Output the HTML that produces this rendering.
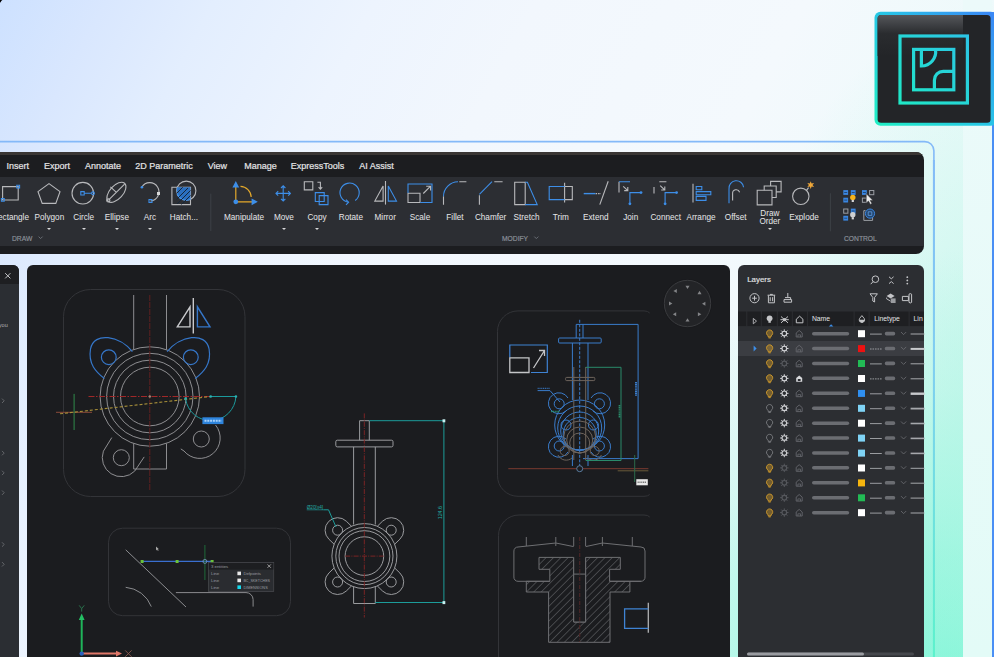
<!DOCTYPE html>
<html><head><meta charset="utf-8">
<style>
*{box-sizing:border-box;margin:0;padding:0}
html,body{width:994px;height:657px;overflow:hidden}
body{position:relative;font-family:"Liberation Sans",sans-serif;
background:radial-gradient(260px 420px at 1000px 420px,rgba(170,245,225,.6) 0%,rgba(170,245,225,0) 100%),radial-gradient(430px 470px at 950px 720px,rgba(118,246,212,1) 0%,rgba(135,246,218,.8) 35%,rgba(170,246,228,.35) 70%,rgba(200,246,235,0) 100%),linear-gradient(118deg,#cde1ff 0%,#d9e7fe 8%,#e3eefe 16%,#edf4fe 28%,#f2f7fd 40%,#f4f9fd 60%,#ecfafa 80%,#e2f9f5 100%)}
.a{position:absolute}
#frame{left:-20px;top:141px;width:955px;height:540px;border-radius:10px;border:1.5px solid #82b8f6;border-left:none;
border-color:#82b8f6 #7ed8e6 #60eccb #82b8f6}
#glow{display:none}
#glow2{left:963px;top:0;width:29px;height:657px;background:linear-gradient(180deg,#ecfafa,#e3fbf7)}
#rline{left:992px;top:12px;width:2px;height:645px;background:#4a8ff5}
#win{left:-10px;top:152px;width:934px;height:102.4px;border-radius:8px;background:#1c1d20;overflow:hidden}
#wtop{left:0;top:0;width:100%;height:3px;background:#3a3634}
#ribbon{left:0;top:25px;width:100%;height:69px;background:#2c2e33}
.menu{top:161.5px;line-height:1;font-size:9px;color:#e4e4e6;white-space:nowrap;-webkit-text-stroke:.2px currentColor}
.lbl{top:214px;line-height:1;font-size:8.2px;color:#e6e6e8;white-space:nowrap;transform:translateX(-50%)}
.grp{top:235.1px;line-height:1;font-size:7.8px;transform:scaleX(.86);transform-origin:0 0;color:#8b9099;white-space:nowrap;-webkit-text-stroke:.2px currentColor}
#lp{left:-10px;top:265px;width:29px;height:400px;border-radius:6px;background:#2b2e33;overflow:hidden}
#cv{left:27px;top:265px;width:703px;height:400px;border-radius:6px;background:#1b1c1f;overflow:hidden}
#ly{left:738px;top:265px;width:186px;height:400px;border-radius:6px;background:#2c2e32;overflow:hidden}
.dd{top:227.8px;width:0;height:0;border-left:2px solid transparent;border-right:2px solid transparent;border-top:2px solid #d8d8da}
</style></head><body>
<div class="a" id="glow"></div>
<div class="a" id="glow2"></div>
<svg class="a" style="left:0;top:0" width="994" height="657">
<defs><linearGradient id="fg" gradientUnits="userSpaceOnUse" x1="0" y1="141" x2="0" y2="657">
<stop offset="0" stop-color="#84b9f8"/><stop offset=".45" stop-color="#7fcff0"/><stop offset="1" stop-color="#5cf2cc"/></linearGradient></defs>
<path d="M-5 141.6H924.5A9.2 9.2 0 0 1 933.9 151V700" fill="none" stroke="url(#fg)" stroke-width="1.6"/>
<path d="M933.9 160V700" fill="none" stroke="url(#fg)" stroke-width="2"/>
</svg>
<div class="a" id="rline"></div>
<svg class="a" style="left:0;top:0" width="994" height="140">
<defs>
<linearGradient id="ibd" gradientUnits="userSpaceOnUse" x1="875" y1="126" x2="994" y2="12">
<stop offset="0" stop-color="#20f0c4"/><stop offset=".5" stop-color="#27c6e6"/><stop offset="1" stop-color="#3a86f6"/></linearGradient>
<linearGradient id="igl" x1="0" y1="0" x2="0" y2="1">
<stop offset="0" stop-color="#55575b"/><stop offset=".45" stop-color="#2a2c2f"/><stop offset="1" stop-color="#232528"/></linearGradient>
<linearGradient id="ilg" gradientUnits="userSpaceOnUse" x1="900" y1="104" x2="968" y2="35">
<stop offset="0" stop-color="#1fe8c6"/><stop offset="1" stop-color="#2cc4e6"/></linearGradient>
</defs>
<rect x="874.5" y="11.8" width="122" height="114" rx="6" fill="url(#ibd)"/>
<rect x="877.6" y="14.9" width="113" height="107.8" rx="3.5" fill="#232528"/>
<path d="M881 14.9H963V56H877.6V18.4A3.5 3.5 0 0 1 881 14.9Z" fill="url(#igl)"/>
<g fill="none" stroke="url(#ilg)" stroke-width="3.2">
<rect x="900" y="36" width="67.4" height="67"/>
<rect x="913.6" y="49.4" width="40.2" height="40.4"/>
<path d="M921.4 49.4V66A14.4 14.4 0 0 0 935.5 49.4"/>
<path d="M953.8 71.4H943.2A8.8 8.8 0 0 0 934.4 80.2V89.8"/>
</g>
</svg>


<div class="a" id="win">
  <div class="a" id="wtop"></div>
  <div class="a" id="ribbon"></div>
</div>
<span class="a menu" style="left:6.4px">Insert</span><span class="a menu" style="left:43.9px">Export</span><span class="a menu" style="left:84.9px">Annotate</span><span class="a menu" style="left:135.2px">2D Parametric</span><span class="a menu" style="left:207.7px">View</span><span class="a menu" style="left:244.2px">Manage</span><span class="a menu" style="left:290.7px">ExpressTools</span><span class="a menu" style="left:359.3px">AI Assist</span>
<span class="a lbl" style="left:29px;transform:translateX(-100%)">Rectangle</span><span class="a lbl" style="left:49.4px">Polygon</span><span class="a lbl" style="left:83.7px">Circle</span><span class="a lbl" style="left:116.9px">Ellipse</span><span class="a lbl" style="left:149.9px">Arc</span><span class="a lbl" style="left:183.9px">Hatch...</span><span class="a lbl" style="left:244px">Manipulate</span><span class="a lbl" style="left:283.9px">Move</span><span class="a lbl" style="left:317px">Copy</span><span class="a lbl" style="left:350.9px">Rotate</span><span class="a lbl" style="left:385.2px">Mirror</span><span class="a lbl" style="left:420px">Scale</span><span class="a lbl" style="left:455px">Fillet</span><span class="a lbl" style="left:490.6px">Chamfer</span><span class="a lbl" style="left:526.6px">Stretch</span><span class="a lbl" style="left:560.9px">Trim</span><span class="a lbl" style="left:595.8px">Extend</span><span class="a lbl" style="left:630.7px">Join</span><span class="a lbl" style="left:665.7px">Connect</span><span class="a lbl" style="left:701px">Arrange</span><span class="a lbl" style="left:735.7px">Offset</span><span class="a lbl" style="left:804px">Explode</span><span class="a lbl" style="left:769.9px;top:209.8px;text-align:center;line-height:8.4px">Draw<br>Order</span>
<div class="a dd" style="left:47.4px"></div><div class="a dd" style="left:81.7px"></div><div class="a dd" style="left:114.9px"></div><div class="a dd" style="left:147.9px"></div><div class="a dd" style="left:281.9px"></div><div class="a dd" style="left:315px"></div><div class="a dd" style="left:767.9px"></div>
<span class="a grp" style="left:11.7px">DRAW</span><span class="a grp" style="left:501.6px">MODIFY</span><span class="a grp" style="left:843.9px">CONTROL</span>
<svg class="a" style="left:0;top:0" width="994" height="260"><path d="M38.6 236.6l2 2 2-2M534.3 236.6l2 2 2-2" fill="none" stroke="#6f747c" stroke-width=".9"/><path d="M210.8 193.7V231M830.4 193.3V231.3" stroke="#3d4046" stroke-width="1"/></svg>

<div class="a" id="lp"></div>
<svg class="a" style="left:0;top:0" width="30" height="657">
<defs><clipPath id="lpc"><rect x="-10" y="265" width="29" height="400" rx="6"/></clipPath></defs>
<g clip-path="url(#lpc)">
<rect x="-10" y="265" width="29" height="19" fill="#1e1f22"/>
<path d="M5.2 273.2l5.2 5.2M10.4 273.2l-5.2 5.2" stroke="#c4c5c8" stroke-width="1"/>
<text x="-1.2" y="326.6" font-family="Liberation Sans" font-size="5.6" fill="#b0b2b5">you</text>
<g fill="none" stroke="#6a6c70" stroke-width=".9">
<path d="M2 398.6l2.2 2.2-2.2 2.2M2 450.9l2.2 2.2-2.2 2.2M2 470.7l2.2 2.2-2.2 2.2M2 490.5l2.2 2.2-2.2 2.2M2 542.3l2.2 2.2-2.2 2.2M2 562.1l2.2 2.2-2.2 2.2"/>
</g></g></svg>
<div class="a" id="cv"></div>
<svg class="a" style="left:0;top:0" width="994" height="657">
<defs><clipPath id="cvc"><rect x="27" y="265" width="703" height="400" rx="6"/></clipPath>
<pattern id="hp" patternUnits="userSpaceOnUse" width="5.2" height="5.2" patternTransform="rotate(45)"><path d="M0 0V5.2" stroke="#6e6f72" stroke-width="1"/></pattern></defs>
<g clip-path="url(#cvc)">
<!-- frames -->
<g fill="none" stroke="#333438" stroke-width="1">
<rect x="63.5" y="289.5" width="181.5" height="207" rx="27"/>
<rect x="108.5" y="528.2" width="182" height="87.5" rx="14"/>
<path d="M649.7 313Q648 310.9 644 310.9H518A20.5 20.5 0 0 0 497.5 331.4V475.8A20.5 20.5 0 0 0 518 496.3H644Q648 496.3 649.7 494.5"/>
<path d="M649.7 517Q648 515 644 515H519A20.5 20.5 0 0 0 498.5 535.5V700"/>
</g>
<!-- ===== drawing 1 ===== -->
<g fill="none" stroke="#939497" stroke-width=".95">
<path d="M133.7 295V349.5M166.5 295V349.5M133.7 443.5V469H166.5V443.5"/>
<circle cx="149.8" cy="396.5" r="49.7"/><circle cx="149.8" cy="396.5" r="43.2"/><circle cx="149.8" cy="396.5" r="36.3"/><circle cx="149.8" cy="396.5" r="29.3"/>
<circle cx="121.3" cy="457.7" r="8"/><circle cx="201.3" cy="439" r="8"/>
<path d="M111.8 437.6L103.4 451.2A19 19 0 0 0 134.7 471.1L144.2 456.9"/>
<path d="M180.8 448.9L184 451A19.5 19.5 0 0 0 215.5 425"/>
<path d="M190 333.6V298" stroke="#c8c9cc" stroke-width="1.4" transform="translate(3.3 0)"/>
<path d="M190 306.8V326.9H177.3Z" stroke="#c8c9cc" stroke-width="1.4"/>
</g>
<g fill="none" stroke="#3576c8" stroke-width="1.2">
<circle cx="108.8" cy="357.2" r="7.4"/><circle cx="190.8" cy="357.2" r="7.4"/>
<path d="M132.4 351.7C120 336 94 331 90.5 349C88 364 96 372 104.4 378.5"/>
<path d="M167.2 351.7C179.6 336 205.6 331 209.1 349C211.6 364 203.6 372 195.2 378.5"/>
<path d="M197.4 306.8V326.9H210Z" stroke-width="1.4"/>
</g>
<path d="M149.8 295V491" fill="none" stroke="#5e2020" stroke-width="1" stroke-dasharray="6 1"/>
<path d="M88.5 396.5H210.7" fill="none" stroke="#a02828" stroke-width="1" stroke-dasharray="6 1.5 1.5 1.5"/>
<circle cx="149.8" cy="396.5" r="1.2" fill="#9a8a7a"/>
<path d="M56 412.3H92" stroke="#8b4a3a" stroke-width="1"/>
<path d="M60 413.8L210.7 396.5" stroke="#a8903a" stroke-width="1.1" stroke-dasharray="3 2"/>
<path d="M74.1 393.9V430" stroke="#2f8a4a" stroke-width="1"/>
<g fill="none" stroke="#1b9a9c" stroke-width="1">
<path d="M210.7 396.5H235.9M185.6 399A25.3 25.3 0 0 0 235.9 396.5"/>
</g>
<g fill="#2ab2b2"><circle cx="185.6" cy="398.5" r="1.3"/><circle cx="210.7" cy="396.5" r="1.3"/><circle cx="235.9" cy="396.5" r="1.3"/></g>
<rect x="202.4" y="417.3" width="21.1" height="6.8" fill="#2e84dc"/>
<path d="M204.5 420.7H221.5" stroke="#a8d0f8" stroke-width="2" stroke-dasharray="2 .8"/>
<!-- ===== drawing 2 center valve ===== -->
<g fill="none" stroke="#a0a1a4" stroke-width=".95">
<path d="M359.6 440.2V420.7H369.3V440.2"/>
<rect x="335.8" y="440.2" width="57.2" height="6.7" rx="1.5"/>
<path d="M353.6 446.9V524.5M375.3 446.9V524.5M353.6 587V603.5H375.3V587"/>
<circle cx="364.4" cy="556.1" r="32.5"/><circle cx="364.4" cy="556.1" r="28.6"/><circle cx="364.4" cy="556.1" r="25.4"/><circle cx="364.4" cy="556.1" r="19.3"/>
<circle cx="337.6" cy="530.2" r="5"/><circle cx="391.2" cy="530.2" r="5"/><circle cx="337.6" cy="582" r="5"/><circle cx="391.2" cy="582" r="5"/>
<path d="M351.5 526.3L346.3 521.2A12.5 12.5 0 0 0 328.9 539.2L334.1 544.2M394.7 544.2L399.9 539.2A12.5 12.5 0 0 0 382.5 521.2L377.3 526.3M334.1 568.0L328.9 573.0A12.5 12.5 0 0 0 346.3 591.0L351.5 585.9M377.3 585.9L382.5 591.0A12.5 12.5 0 0 0 399.9 573.0L394.7 568.0"/>
</g>
<path d="M364.3 413.4V617.5M345.2 556.1H383.7" stroke="#862626" stroke-width=".9" stroke-dasharray="5 1.2 1 1.2" fill="none"/>
<g fill="none" stroke="#1c9c9a" stroke-width="1">
<path d="M369.3 420.7H443.9V602.5H375.3"/>
<path d="M323.4 509.8H328.5L336 527"/>
</g>
<rect x="442.5" y="419.3" width="2.8" height="3" fill="#c8f0f0"/><rect x="442.5" y="601.1" width="2.8" height="3" fill="#c8f0f0"/>
<text transform="translate(441.8 519.3) rotate(-90)" font-family="Liberation Sans" font-size="4.8" fill="#22aaa2" textLength="13.3" lengthAdjust="spacingAndGlyphs">124.6</text>
<text x="306.7" y="509" font-family="Liberation Sans" font-size="4.6" fill="#22aaa2" textLength="16.5" lengthAdjust="spacingAndGlyphs">Ø20[x4]</text><path d="M306.7 509.8H323.4" stroke="#1c9c9a" stroke-width=".7"/>
<!-- ===== drawing 3 blue valve ===== -->
<g fill="none" stroke="#3f83d4" stroke-width="1.2">
<path d="M509.8 357.5V345H547.3V372.5H531"/>
</g>
<path d="M509.8 357.9H529V372.5H509.8Z" fill="none" stroke="#c4c5c8" stroke-width="1.3"/>
<path d="M533.5 368L544.5 350.5M539 350.5H544.5V356" fill="none" stroke="#c4c5c8" stroke-width="1.3"/>
<g fill="none" stroke="#3a7ccb" stroke-width="1">
<path d="M576.2 338V324.4H583V338"/>
<rect x="558.6" y="338" width="42.6" height="5" rx="1"/>
<path d="M572.4 343V400M588 343V400M572.4 455V466M588 455V466"/>
<path d="M583 324.4H638.1V458.6H583"/>
<circle cx="579.7" cy="425" r="25"/><circle cx="579.7" cy="428" r="22"/><circle cx="579.7" cy="431" r="19"/><circle cx="579.7" cy="434" r="16.5"/><circle cx="566" cy="425" r="5"/><circle cx="593.4" cy="425" r="5"/>
<circle cx="559.2" cy="403.8" r="5"/><circle cx="599.4" cy="403.8" r="5"/><circle cx="559.2" cy="446" r="5"/><circle cx="599.4" cy="446" r="5"/>
<path d="M566 411A10.5 10.5 0 1 1 568 398M593 411A10.5 10.5 0 1 0 591 398M566 439A10.5 10.5 0 1 0 568 452M593 439A10.5 10.5 0 1 1 591 452"/>
</g>
<path d="M579.7 319.8V470.6" stroke="#3a7ccb" stroke-width="1" stroke-dasharray="3 1.5"/>
<g fill="none" stroke="#6e645c" stroke-width="1">
<rect x="565.6" y="377.4" width="29.2" height="3.2" rx="1"/>
<path d="M573.8 367V460M585.7 367V460"/>
<circle cx="579.7" cy="437" r="16"/><circle cx="579.7" cy="440" r="13"/><circle cx="579.7" cy="443" r="10"/>
<circle cx="564.7" cy="451" r="4.5"/><circle cx="594.7" cy="451" r="4.5"/>
<path d="M558 455A9 9 0 0 0 572 458M601.4 455A9 9 0 0 1 587.4 458"/>
</g>
<g fill="none" stroke="#2a8a6a" stroke-width="1">
<path d="M585.7 367.3H621V460.5H585.7"/>
</g>
<path d="M508.3 468.7H648.4" stroke="#7a3a30" stroke-width="1"/>
<path d="M617.7 470.8H648.4" stroke="#6a5a3a" stroke-width="1"/>
<path d="M634.7 455V482" stroke="#2a6a4a" stroke-width="1"/>
<circle cx="579.7" cy="468.7" r="3" fill="#1b1c1f" stroke="#5a7ca0" stroke-width="1"/>
<rect x="636.3" y="479.2" width="11.5" height="6.1" fill="#e8e8e8"/>
<path d="M637.6 482.2H646.6" stroke="#777" stroke-width="1.4" stroke-dasharray="1.2 .6"/>
<path d="M636 382V396" stroke="#3a7ccb" stroke-width="2" stroke-dasharray="1.2 .6"/>
<path d="M619.5 405V418" stroke="#2a8a6a" stroke-width="1.8" stroke-dasharray="1.2 .6"/>
<path d="M550 390.6L560 402" stroke="#3a7ccb" stroke-width="1"/>
<path d="M537.6 388.3H550" stroke="#3a7ccb" stroke-width="1" stroke-dasharray="1.2 .6"/>
<path d="M537.6 390.6H550" stroke="#3a7ccb" stroke-width="1"/>
<path d="M551 411.5H560" stroke="#2a8a6a" stroke-width="1.6" stroke-dasharray="1.2 .6"/>
<!-- ===== drawing 4 hatch T ===== -->
<g fill="none" stroke="#6e6f72" stroke-width="1">
<path d="M526.3 537V546M555.8 537V546M573.7 537V546M585.6 537V546M602.4 537V546M632.3 537V546"/>
<path d="M518 581.3A4 4 0 0 1 513.9 577V551A4 4 0 0 1 518 547L555.8 543 573.7 546.6M585.6 546.6L602.4 543 641 547A4 4 0 0 1 645 551V577A4 4 0 0 1 641 581.3H629.9"/>
</g>
<path d="M539 557.4H573.7V622H585.6V557.4H620.3V569.3H609.6V581.3H629.9V592H610V642.3H548.6V592H526.3V581.3H549.8V569.3H539Z" fill="url(#hp)" stroke="#6e6f72" stroke-width="1"/>
<path d="M573.7 557.4V622H585.6V557.4" fill="#1b1c1f" stroke="#6e6f72" stroke-width="1"/>
<path d="M518 581.3H549.8M609.6 581.3H641M573.7 574.1H585.6" fill="none" stroke="#6e6f72" stroke-width="1"/>
<path d="M579.7 537V642" stroke="#4a2626" stroke-width="1.2" stroke-dasharray="4 1.5 1 1.5"/>
<path d="M648.3 602.8V632.7" stroke="#b0b1b4" stroke-width="1.3"/>
<path d="M648.3 608.8H624.6V628.4H648.3" fill="none" stroke="#3f83d4" stroke-width="1.3"/>
<!-- ===== drawing 5 selection ===== -->
<g fill="none" stroke="#8a8b8e" stroke-width="1">
<path d="M125.7 549.8L186 607"/>
<path d="M125.7 587.3A30 30 0 0 1 151.3 606.6"/>
<path d="M175.9 592.6H246A7 7 0 0 1 253.1 599.6V606.6"/>
</g>
<path d="M142.1 561.4H212.1" stroke="#3a6fd0" stroke-width="1.3"/>
<path d="M204.9 545V580" stroke="#1f6a3a" stroke-width="1"/>
<g fill="#6ac23a"><rect x="140.6" y="560" width="3" height="3"/><rect x="175.6" y="560" width="3" height="3"/><rect x="210.6" y="560" width="3" height="3"/></g>
<circle cx="204.9" cy="561.4" r="2" fill="none" stroke="#7a9aba" stroke-width=".8"/>
<path d="M156 546.4v4l1-1 1 1.6.6-.3-.9-1.5h1.3z" fill="#aaa"/>
<rect x="208.5" y="562.6" width="65.2" height="29" fill="#2a2c30" stroke="#45474b" stroke-width=".8"/>
<rect x="208.9" y="563" width="64.4" height="6.6" fill="#1d1e21"/>
<g font-family="Liberation Sans" font-size="4.3" fill="#9a9ca0">
<text x="211" y="568.4">3 entities</text>
<text x="211" y="575.2">Line</text><text x="211" y="582.2">Line</text><text x="211" y="589">Line</text>
<text x="243.4" y="575.2" textLength="17.5" lengthAdjust="spacingAndGlyphs">Defpoints</text><text x="243.4" y="582.2" textLength="26.6" lengthAdjust="spacingAndGlyphs">BC_SKETCHES</text><text x="243.4" y="589" textLength="24.3" lengthAdjust="spacingAndGlyphs">DIMENSIONS</text>
</g>
<path d="M267.5 564.4l3.4 3.4M270.9 564.4l-3.4 3.4" stroke="#b8b8b8" stroke-width=".8"/>
<rect x="237.4" y="571.6" width="3.6" height="3.6" fill="#e8e8e8"/><rect x="237.4" y="578.6" width="3.6" height="3.6" fill="#e8e8e8"/><rect x="237.4" y="585.4" width="3.6" height="3.6" fill="#14d8ec"/>
<!-- UCS -->
<path d="M81.7 653.6V618" stroke="#1fb45a" stroke-width="2"/>
<path d="M78.8 620L81.7 613.6 84.6 620Z" fill="#24c064"/>
<path d="M79.2 605.4L81.7 608.6 84.2 605.4M81.7 608.6V611.6" fill="none" stroke="#2a7a50" stroke-width=".9"/>
<path d="M81.7 653.6H117" stroke="#e0786a" stroke-width="2"/>
<path d="M116 650.8L122 653.6 116 656.4Z" fill="#e0786a"/>
<path d="M125.2 650.4L131.6 656.8M131.6 650.4L125.2 656.8" fill="none" stroke="#8a5a50" stroke-width=".9"/>
<circle cx="81.7" cy="653.6" r="2.2" fill="#2a62c0"/>
<!-- nav wheel -->
<circle cx="687.5" cy="303.5" r="24.5" fill="#19191c" opacity=".6"/>
<circle cx="687.5" cy="303.5" r="23.2" fill="#232427" stroke="#3a3b3e" stroke-width="1"/>
<g fill="#838487"><path d="M685.5 285.7L689.5 285.7 687.5 289.1Z"/><path d="M685.5 321.6L689.5 321.6 687.5 318.2Z"/><path d="M669.0 301.5L669.0 305.5 672.4 303.5Z"/><path d="M705.4 301.8L705.4 305.8 702.0 303.8Z"/><path d="M676.8 289.0L676.8 293.0 673.4 291.0Z"/><path d="M697.5 294.2L701.5 294.2 699.5 290.8Z"/><path d="M676.2 312.2L676.2 316.2 672.8 314.2Z"/><path d="M697.9 312.2L697.9 316.2 701.3 314.2Z"/>
</g>
</g>
</svg>

<div class="a" id="ly"></div>
<svg class="a" style="left:0;top:0" width="994" height="657">
<rect x="738" y="311.5" width="8.3" height="14.6" fill="#1e1f22"/>
<rect x="747.3" y="311.5" width="13.5" height="14.6" fill="#1e1f22"/>
<rect x="761.8" y="311.5" width="15.0" height="14.6" fill="#1e1f22"/>
<rect x="777.8" y="311.5" width="14.0" height="14.6" fill="#1e1f22"/>
<rect x="792.8" y="311.5" width="14.1" height="14.6" fill="#1e1f22"/>
<rect x="807.9" y="311.5" width="45.7" height="14.6" fill="#1e1f22"/>
<rect x="854.6" y="311.5" width="14.0" height="14.6" fill="#1e1f22"/>
<rect x="869.6" y="311.5" width="39.0" height="14.6" fill="#1e1f22"/>
<rect x="909.6" y="311.5" width="14.4" height="14.6" fill="#1e1f22"/>
<rect x="738" y="341" width="186" height="15" fill="#3b3d42"/>
<path d="M753.3 318.4v5.4l3.2-2.7z" fill="none" stroke="#b8b9bc" stroke-width=".9"/>
<circle cx="769.6" cy="318.3" r="2.9" fill="#c4c5c8"/><rect x="768.4" y="321" width="2.4" height="1.8" fill="#c4c5c8"/>
<g stroke="#c4c5c8" stroke-width="1"><path d="M781 316.5l7 6.4M788 316.5l-7 6.4M780.4 319.7h8.4"/></g><circle cx="784.5" cy="319.7" r="1.6" fill="#c4c5c8"/>
<path d="M796.3 322.8v-3.6l3.3-3 3.3 3v3.6z" fill="none" stroke="#c4c5c8" stroke-width="1"/>
<path d="M828.9 326.4l2.2-2.2 2.2 2.2z" fill="#3d8ee8"/>
<path d="M859.3 319.8a2.6 2.6 0 0 0 5.2 0z" fill="#c4c5c8"/><path d="M861.9 315.6l-2.4 3a2.7 2.7 0 1 0 4.8 0z" fill="none" stroke="#c4c5c8" stroke-width=".9"/>
<g fill="none" stroke="#c9962d" stroke-width="1"><path d="M768.2 335.8A3.1 3.1 0 1 1 771 335.8V337.0H768.2Z" fill="#c9962d" fill-opacity=".45"/><path d="M768.5 337.9h2.2"/></g>
<g stroke="#cfd0d3" stroke-width="1"><path d="M784.3 329.4v8.4M780.1 333.6h8.4M781.3 330.6l6 6M787.3 330.6l-6 6"/></g><circle cx="784.3" cy="333.6" r="2.3" fill="#2c2e32" stroke="#cfd0d3" stroke-width="1.1"/>
<path d="M796.2 337.0v-4l3-2.6 3 2.6v4z" fill="none" stroke="#65676c" stroke-width=".9"/><path d="M797.9 337.0v-2.2h2.6v2.2" fill="none" stroke="#65676c" stroke-width=".8"/>
<rect x="812" y="331.9" width="37.2" height="3.5" rx="1.75" fill="#6b6d72"/>
<rect x="858" y="330.2" width="7" height="7" fill="#ffffff"/>
<path d="M870 334.1h11.8" stroke="#9a9ca0" stroke-width="1"/>
<rect x="884.8" y="331.8" width="10.4" height="3.6" rx="1.6" fill="#6b6d72"/>
<path d="M901 332.0l2.6 2.6 2.6-2.6" fill="none" stroke="#6d6f74" stroke-width=".8"/>
<path d="M910.6 334.0h14" stroke="#a6a8ac" stroke-width="1.0"/>
<g fill="none" stroke="#c9962d" stroke-width="1"><path d="M768.2 350.7A3.1 3.1 0 1 1 771 350.7V351.9H768.2Z" fill="#c9962d" fill-opacity=".45"/><path d="M768.5 352.8h2.2"/></g>
<g stroke="#cfd0d3" stroke-width="1"><path d="M784.3 344.3v8.4M780.1 348.5h8.4M781.3 345.5l6 6M787.3 345.5l-6 6"/></g><circle cx="784.3" cy="348.5" r="2.3" fill="#2c2e32" stroke="#cfd0d3" stroke-width="1.1"/>
<path d="M796.2 351.9v-4l3-2.6 3 2.6v4z" fill="none" stroke="#65676c" stroke-width=".9"/><path d="M797.9 351.9v-2.2h2.6v2.2" fill="none" stroke="#65676c" stroke-width=".8"/>
<rect x="812" y="346.8" width="37.2" height="3.5" rx="1.75" fill="#6b6d72"/>
<rect x="858" y="345.1" width="7" height="7" fill="#ee1111"/>
<path d="M870 349.0h11.8" stroke="#9a9ca0" stroke-width="1" stroke-dasharray="1.6 .9"/>
<rect x="884.8" y="346.7" width="10.4" height="3.6" rx="1.6" fill="#6b6d72"/>
<path d="M901 346.9l2.6 2.6 2.6-2.6" fill="none" stroke="#6d6f74" stroke-width=".8"/>
<path d="M910.6 348.9h14" stroke="#c8cacd" stroke-width="2.0"/>
<g fill="none" stroke="#c9962d" stroke-width="1"><path d="M768.2 365.6A3.1 3.1 0 1 1 771 365.6V366.8H768.2Z" fill="#c9962d" fill-opacity=".45"/><path d="M768.5 367.7h2.2"/></g>
<g stroke="#56585d" stroke-width="1"><path d="M784.3 359.2v8.4M780.1 363.4h8.4M781.3 360.4l6 6M787.3 360.4l-6 6"/></g><circle cx="784.3" cy="363.4" r="2.3" fill="#2c2e32" stroke="#56585d" stroke-width="1.1"/>
<path d="M796.2 366.8v-4l3-2.6 3 2.6v4z" fill="none" stroke="#65676c" stroke-width=".9"/><path d="M797.9 366.8v-2.2h2.6v2.2" fill="none" stroke="#65676c" stroke-width=".8"/>
<rect x="812" y="361.7" width="37.2" height="3.5" rx="1.75" fill="#6b6d72"/>
<rect x="858" y="360.0" width="7" height="7" fill="#22bb55"/>
<path d="M870 363.9h11.8" stroke="#9a9ca0" stroke-width="1"/>
<rect x="884.8" y="361.6" width="10.4" height="3.6" rx="1.6" fill="#6b6d72"/>
<path d="M901 361.8l2.6 2.6 2.6-2.6" fill="none" stroke="#6d6f74" stroke-width=".8"/>
<path d="M910.6 363.8h14" stroke="#a6a8ac" stroke-width="1.0"/>
<g fill="none" stroke="#c9962d" stroke-width="1"><path d="M768.2 380.6A3.1 3.1 0 1 1 771 380.6V381.8H768.2Z" fill="#c9962d" fill-opacity=".45"/><path d="M768.5 382.7h2.2"/></g>
<g stroke="#cfd0d3" stroke-width="1"><path d="M784.3 374.2v8.4M780.1 378.4h8.4M781.3 375.4l6 6M787.3 375.4l-6 6"/></g><circle cx="784.3" cy="378.4" r="2.3" fill="#2c2e32" stroke="#cfd0d3" stroke-width="1.1"/>
<path d="M796.2 381.8v-3.8l3-2.4 3 2.4v3.8z" fill="#d8d9dc"/><path d="M797.8 379.0h2.8v2h-2.8z" fill="#2c2e32"/>
<rect x="812" y="376.6" width="37.2" height="3.5" rx="1.75" fill="#6b6d72"/>
<rect x="858" y="375.0" width="7" height="7" fill="#ffffff"/>
<path d="M870 378.9h11.8" stroke="#9a9ca0" stroke-width="1" stroke-dasharray="1.6 .9"/>
<rect x="884.8" y="376.6" width="10.4" height="3.6" rx="1.6" fill="#6b6d72"/>
<path d="M901 376.8l2.6 2.6 2.6-2.6" fill="none" stroke="#6d6f74" stroke-width=".8"/>
<path d="M910.6 378.8h14" stroke="#a6a8ac" stroke-width="1.0"/>
<g fill="none" stroke="#c9962d" stroke-width="1"><path d="M768.2 395.5A3.1 3.1 0 1 1 771 395.5V396.7H768.2Z" fill="#c9962d" fill-opacity=".45"/><path d="M768.5 397.6h2.2"/></g>
<g stroke="#cfd0d3" stroke-width="1"><path d="M784.3 389.1v8.4M780.1 393.3h8.4M781.3 390.3l6 6M787.3 390.3l-6 6"/></g><circle cx="784.3" cy="393.3" r="2.3" fill="#2c2e32" stroke="#cfd0d3" stroke-width="1.1"/>
<path d="M796.2 396.7v-4l3-2.6 3 2.6v4z" fill="none" stroke="#65676c" stroke-width=".9"/><path d="M797.9 396.7v-2.2h2.6v2.2" fill="none" stroke="#65676c" stroke-width=".8"/>
<rect x="812" y="391.5" width="37.2" height="3.5" rx="1.75" fill="#6b6d72"/>
<rect x="858" y="389.9" width="7" height="7" fill="#2f8ff0"/>
<path d="M870 393.8h11.8" stroke="#9a9ca0" stroke-width="1"/>
<rect x="884.8" y="391.5" width="10.4" height="3.6" rx="1.6" fill="#6b6d72"/>
<path d="M901 391.7l2.6 2.6 2.6-2.6" fill="none" stroke="#6d6f74" stroke-width=".8"/>
<path d="M910.6 393.7h14" stroke="#c8cacd" stroke-width="2.4"/>
<g fill="none" stroke="#74767a" stroke-width="1"><path d="M768.2 410.4A3.1 3.1 0 1 1 771 410.4V411.6H768.2Z" fill="#74767a" fill-opacity="0"/><path d="M768.5 412.5h2.2"/></g>
<g stroke="#cfd0d3" stroke-width="1"><path d="M784.3 404.0v8.4M780.1 408.2h8.4M781.3 405.2l6 6M787.3 405.2l-6 6"/></g><circle cx="784.3" cy="408.2" r="2.3" fill="#2c2e32" stroke="#cfd0d3" stroke-width="1.1"/>
<path d="M796.2 411.6v-4l3-2.6 3 2.6v4z" fill="none" stroke="#65676c" stroke-width=".9"/><path d="M797.9 411.6v-2.2h2.6v2.2" fill="none" stroke="#65676c" stroke-width=".8"/>
<rect x="812" y="406.5" width="37.2" height="3.5" rx="1.75" fill="#6b6d72"/>
<rect x="858" y="404.8" width="7" height="7" fill="#7fd3f5"/>
<path d="M870 408.7h11.8" stroke="#9a9ca0" stroke-width="1"/>
<rect x="884.8" y="406.4" width="10.4" height="3.6" rx="1.6" fill="#6b6d72"/>
<path d="M901 406.6l2.6 2.6 2.6-2.6" fill="none" stroke="#6d6f74" stroke-width=".8"/>
<path d="M910.6 408.6h14" stroke="#a6a8ac" stroke-width="1.8"/>
<g fill="none" stroke="#74767a" stroke-width="1"><path d="M768.2 425.3A3.1 3.1 0 1 1 771 425.3V426.5H768.2Z" fill="#74767a" fill-opacity="0"/><path d="M768.5 427.4h2.2"/></g>
<g stroke="#cfd0d3" stroke-width="1"><path d="M784.3 418.9v8.4M780.1 423.1h8.4M781.3 420.1l6 6M787.3 420.1l-6 6"/></g><circle cx="784.3" cy="423.1" r="2.3" fill="#2c2e32" stroke="#cfd0d3" stroke-width="1.1"/>
<path d="M796.2 426.5v-4l3-2.6 3 2.6v4z" fill="none" stroke="#65676c" stroke-width=".9"/><path d="M797.9 426.5v-2.2h2.6v2.2" fill="none" stroke="#65676c" stroke-width=".8"/>
<rect x="812" y="421.4" width="37.2" height="3.5" rx="1.75" fill="#6b6d72"/>
<rect x="858" y="419.7" width="7" height="7" fill="#ffffff"/>
<path d="M870 423.6h11.8" stroke="#9a9ca0" stroke-width="1"/>
<rect x="884.8" y="421.3" width="10.4" height="3.6" rx="1.6" fill="#6b6d72"/>
<path d="M901 421.5l2.6 2.6 2.6-2.6" fill="none" stroke="#6d6f74" stroke-width=".8"/>
<path d="M910.6 423.5h14" stroke="#a6a8ac" stroke-width="1.6"/>
<g fill="none" stroke="#74767a" stroke-width="1"><path d="M768.2 440.2A3.1 3.1 0 1 1 771 440.2V441.4H768.2Z" fill="#74767a" fill-opacity="0"/><path d="M768.5 442.3h2.2"/></g>
<g stroke="#cfd0d3" stroke-width="1"><path d="M784.3 433.8v8.4M780.1 438.0h8.4M781.3 435.0l6 6M787.3 435.0l-6 6"/></g><circle cx="784.3" cy="438.0" r="2.3" fill="#2c2e32" stroke="#cfd0d3" stroke-width="1.1"/>
<path d="M796.2 441.4v-4l3-2.6 3 2.6v4z" fill="none" stroke="#65676c" stroke-width=".9"/><path d="M797.9 441.4v-2.2h2.6v2.2" fill="none" stroke="#65676c" stroke-width=".8"/>
<rect x="812" y="436.3" width="37.2" height="3.5" rx="1.75" fill="#6b6d72"/>
<rect x="858" y="434.6" width="7" height="7" fill="#7fd3f5"/>
<path d="M870 438.5h11.8" stroke="#9a9ca0" stroke-width="1"/>
<rect x="884.8" y="436.2" width="10.4" height="3.6" rx="1.6" fill="#6b6d72"/>
<path d="M901 436.4l2.6 2.6 2.6-2.6" fill="none" stroke="#6d6f74" stroke-width=".8"/>
<path d="M910.6 438.4h14" stroke="#a6a8ac" stroke-width="1.6"/>
<g fill="none" stroke="#74767a" stroke-width="1"><path d="M768.2 455.2A3.1 3.1 0 1 1 771 455.2V456.4H768.2Z" fill="#74767a" fill-opacity="0"/><path d="M768.5 457.3h2.2"/></g>
<g stroke="#cfd0d3" stroke-width="1"><path d="M784.3 448.8v8.4M780.1 453.0h8.4M781.3 450.0l6 6M787.3 450.0l-6 6"/></g><circle cx="784.3" cy="453.0" r="2.3" fill="#2c2e32" stroke="#cfd0d3" stroke-width="1.1"/>
<path d="M796.2 456.4v-4l3-2.6 3 2.6v4z" fill="none" stroke="#65676c" stroke-width=".9"/><path d="M797.9 456.4v-2.2h2.6v2.2" fill="none" stroke="#65676c" stroke-width=".8"/>
<rect x="812" y="451.2" width="37.2" height="3.5" rx="1.75" fill="#6b6d72"/>
<rect x="858" y="449.6" width="7" height="7" fill="#7fd3f5"/>
<path d="M870 453.5h11.8" stroke="#9a9ca0" stroke-width="1"/>
<rect x="884.8" y="451.2" width="10.4" height="3.6" rx="1.6" fill="#6b6d72"/>
<path d="M901 451.4l2.6 2.6 2.6-2.6" fill="none" stroke="#6d6f74" stroke-width=".8"/>
<path d="M910.6 453.4h14" stroke="#a6a8ac" stroke-width="1.6"/>
<g fill="none" stroke="#c9962d" stroke-width="1"><path d="M768.2 470.1A3.1 3.1 0 1 1 771 470.1V471.3H768.2Z" fill="#c9962d" fill-opacity=".45"/><path d="M768.5 472.2h2.2"/></g>
<g stroke="#56585d" stroke-width="1"><path d="M784.3 463.7v8.4M780.1 467.9h8.4M781.3 464.9l6 6M787.3 464.9l-6 6"/></g><circle cx="784.3" cy="467.9" r="2.3" fill="#2c2e32" stroke="#56585d" stroke-width="1.1"/>
<path d="M796.2 471.3v-4l3-2.6 3 2.6v4z" fill="none" stroke="#65676c" stroke-width=".9"/><path d="M797.9 471.3v-2.2h2.6v2.2" fill="none" stroke="#65676c" stroke-width=".8"/>
<rect x="812" y="466.1" width="37.2" height="3.5" rx="1.75" fill="#6b6d72"/>
<rect x="858" y="464.5" width="7" height="7" fill="#ffffff"/>
<path d="M870 468.4h11.8" stroke="#9a9ca0" stroke-width="1"/>
<rect x="884.8" y="466.1" width="10.4" height="3.6" rx="1.6" fill="#6b6d72"/>
<path d="M901 466.3l2.6 2.6 2.6-2.6" fill="none" stroke="#6d6f74" stroke-width=".8"/>
<path d="M910.6 468.3h14" stroke="#a6a8ac" stroke-width="1.0"/>
<g fill="none" stroke="#c9962d" stroke-width="1"><path d="M768.2 485.0A3.1 3.1 0 1 1 771 485.0V486.2H768.2Z" fill="#c9962d" fill-opacity=".45"/><path d="M768.5 487.1h2.2"/></g>
<g stroke="#56585d" stroke-width="1"><path d="M784.3 478.6v8.4M780.1 482.8h8.4M781.3 479.8l6 6M787.3 479.8l-6 6"/></g><circle cx="784.3" cy="482.8" r="2.3" fill="#2c2e32" stroke="#56585d" stroke-width="1.1"/>
<path d="M796.2 486.2v-4l3-2.6 3 2.6v4z" fill="none" stroke="#65676c" stroke-width=".9"/><path d="M797.9 486.2v-2.2h2.6v2.2" fill="none" stroke="#65676c" stroke-width=".8"/>
<rect x="812" y="481.1" width="37.2" height="3.5" rx="1.75" fill="#6b6d72"/>
<rect x="858" y="479.4" width="7" height="7" fill="#f5b50f"/>
<path d="M870 483.3h11.8" stroke="#9a9ca0" stroke-width="1"/>
<rect x="884.8" y="481.0" width="10.4" height="3.6" rx="1.6" fill="#6b6d72"/>
<path d="M901 481.2l2.6 2.6 2.6-2.6" fill="none" stroke="#6d6f74" stroke-width=".8"/>
<path d="M910.6 483.2h14" stroke="#a6a8ac" stroke-width="1.0"/>
<g fill="none" stroke="#c9962d" stroke-width="1"><path d="M768.2 499.9A3.1 3.1 0 1 1 771 499.9V501.1H768.2Z" fill="#c9962d" fill-opacity=".45"/><path d="M768.5 502.0h2.2"/></g>
<g stroke="#56585d" stroke-width="1"><path d="M784.3 493.5v8.4M780.1 497.7h8.4M781.3 494.7l6 6M787.3 494.7l-6 6"/></g><circle cx="784.3" cy="497.7" r="2.3" fill="#2c2e32" stroke="#56585d" stroke-width="1.1"/>
<path d="M796.2 501.1v-4l3-2.6 3 2.6v4z" fill="none" stroke="#65676c" stroke-width=".9"/><path d="M797.9 501.1v-2.2h2.6v2.2" fill="none" stroke="#65676c" stroke-width=".8"/>
<rect x="812" y="496.0" width="37.2" height="3.5" rx="1.75" fill="#6b6d72"/>
<rect x="858" y="494.3" width="7" height="7" fill="#22bb55"/>
<path d="M870 498.2h11.8" stroke="#9a9ca0" stroke-width="1"/>
<rect x="884.8" y="495.9" width="10.4" height="3.6" rx="1.6" fill="#6b6d72"/>
<path d="M901 496.1l2.6 2.6 2.6-2.6" fill="none" stroke="#6d6f74" stroke-width=".8"/>
<path d="M910.6 498.1h14" stroke="#a6a8ac" stroke-width="1.0"/>
<g fill="none" stroke="#c9962d" stroke-width="1"><path d="M768.2 514.8A3.1 3.1 0 1 1 771 514.8V516.0H768.2Z" fill="#c9962d" fill-opacity=".45"/><path d="M768.5 516.9h2.2"/></g>
<g stroke="#56585d" stroke-width="1"><path d="M784.3 508.4v8.4M780.1 512.6h8.4M781.3 509.6l6 6M787.3 509.6l-6 6"/></g><circle cx="784.3" cy="512.6" r="2.3" fill="#2c2e32" stroke="#56585d" stroke-width="1.1"/>
<path d="M796.2 516.0v-4l3-2.6 3 2.6v4z" fill="none" stroke="#65676c" stroke-width=".9"/><path d="M797.9 516.0v-2.2h2.6v2.2" fill="none" stroke="#65676c" stroke-width=".8"/>
<rect x="812" y="510.9" width="37.2" height="3.5" rx="1.75" fill="#6b6d72"/>
<rect x="858" y="509.2" width="7" height="7" fill="#ffffff"/>
<path d="M870 513.1h11.8" stroke="#9a9ca0" stroke-width="1"/>
<rect x="884.8" y="510.8" width="10.4" height="3.6" rx="1.6" fill="#6b6d72"/>
<path d="M901 511.0l2.6 2.6 2.6-2.6" fill="none" stroke="#6d6f74" stroke-width=".8"/>
<path d="M910.6 513.0h14" stroke="#a6a8ac" stroke-width="1.0"/>
<path d="M753.6 345.6v6l3-3z" fill="#3d8ee8"/>
<rect x="747" y="652.5" width="167" height="3" rx="1.5" fill="#46484d"/><rect x="747" y="652.5" width="117" height="3" rx="1.5" fill="#9a9ca1"/>
<g fill="none" stroke="#c4c5c8" stroke-width="1">
<circle cx="875.4" cy="279.2" r="3.3"/><path d="M873.1 281.6l-2.4 2.6"/>
<path d="M889 276.8l2.3 2 2.3-2M889 283.6l2.3-2 2.3 2"/>
<circle cx="754.5" cy="298.2" r="4.6"/><path d="M754.5 295.8v4.8M752.1 298.2h4.8"/>
<path d="M767.6 295.2h7.6M770 294.4h2.8M768.4 295.4v7.4h6v-7.4M770.2 297.2v4M772.6 297.2v4"/>
<path d="M787.8 293v4.6M785 297.6h5.6v2M784 299.6h7.6v2.6h-7.6z"/>
<path d="M870 293.8h7.4l-2.8 3.6v4.6l-1.8-1v-3.6z"/>
<path d="M902.4 296.4h6v4.2h-6zM909 294.2a2 2 0 0 1 2.6 0v8.2a2 2 0 0 1-2.6 0z"/>
</g>
<path d="M886.6 296l4-2.4 4 2.4-4 2.4z" fill="#c4c5c8"/><path d="M886.6 297.6v1.2l4 2.4" fill="none" stroke="#c4c5c8" stroke-width=".9"/><rect x="890.8" y="298.4" width="4.8" height="4.6" fill="#9a9ca0"/>
<g fill="#c4c5c8"><circle cx="907.3" cy="277.2" r=".9"/><circle cx="907.3" cy="280.4" r=".9"/><circle cx="907.3" cy="283.6" r=".9"/></g>
</svg>
<span class="a" style="left:747.2px;top:276px;font-size:7.9px;line-height:1;color:#e2e3e5;-webkit-text-stroke:.15px #e2e3e5">Layers</span>
<span class="a" style="left:811.9px;top:315.5px;font-size:6.8px;line-height:1;color:#e2e3e5">Name</span>
<span class="a" style="left:874.2px;top:315.5px;font-size:6.8px;line-height:1;color:#e2e3e5">Linetype</span>
<span class="a" style="left:913.6px;top:315.5px;font-size:6.8px;line-height:1;color:#e2e3e5">Lin</span>

<svg class="a" style="left:0;top:0" width="994" height="260">
<g fill="none" stroke="#b8b9bc" stroke-width="1.1">
<!-- rectangle -->
<path d="M2.6 186.6H18.2V200H2.6Z"/>
<!-- polygon -->
<path d="M49 183.6L60 191.6 55.8 203.4H42.2L38 191.6Z"/>
<!-- circle -->
<circle cx="82.8" cy="193.2" r="10.8"/>
<!-- ellipse -->
<ellipse cx="116.4" cy="192.3" rx="12.2" ry="6.6" transform="rotate(-48 116.4 192.3)"/>
<path d="M108.5 200.2L124.6 184.2M116.4 192.3L110.4 186.8"/>
<circle cx="108.3" cy="200.4" r="1.6"/>
<!-- arc -->
<path d="M141.8 187.2A9.2 9.2 0 1 1 150.5 201"/>
<!-- hatch -->
<path d="M171.9 187.2H190.5V204.6H171.9Z"/>
<circle cx="186.3" cy="190.7" r="9.6"/>
<!-- copy gray -->
<path d="M304.3 181.7H312.8V189.9H304.3Z"/>
<path d="M317.4 182.3H320.4V188.8M318.6 187.2l1.8 1.9 1.8-1.9"/>
<!-- mirror -->
<path d="M385.5 181V204.6"/>
<path d="M383.1 185.9V201.1H374.8Z"/>
<!-- scale gray -->
<path d="M408 193.2H420V202.5H408Z"/>
<path d="M423.3 193.5L430.6 186.2M426.2 186.2H430.6V190.6"/>
<!-- fillet/chamfer gray -->
<path d="M443.5 196.3V204.8M459.3 181.7H466.4M479.4 195.3V204.8M494.3 181.7H502.6"/>
<!-- stretch gray -->
<path d="M514.7 182.3H525.2V204.6H514.7Z"/>
<!-- trim gray -->
<path d="M564.6 186.5H572.3V199.6H564.6M564.6 182.7V202.6"/>
<!-- extend gray -->
<path d="M599.8 204.6L608.2 181.3"/>
<path d="M595.6 193.6H601" stroke-dasharray="1.5 1"/>
<!-- join gray -->
<path d="M619 192.6V181.7M623.2 186.3L627.6 190.4M624.2 190.6H627.8V187"/>
<!-- connect gray -->
<path d="M654 187V193.4M659.3 181.7H666.4M660.2 185.6L664.6 189.8M661.2 190H664.8V186.4"/>
<!-- arrange gray -->
<path d="M693 183.7V202.6"/>
<!-- offset gray -->
<path d="M732.6 200.5V193.6A3.6 3.6 0 0 1 739.6 192.2"/>
<!-- draw order -->
<path d="M770.6 186V181.4H781.1V191.9H776.2M764.2 190.2V186H776.2V197.5H772"/>
<path d="M757.2 190.2H772V204.9H757.2Z"/>
<!-- explode -->
<circle cx="800.8" cy="196.3" r="8.2"/>
<path d="M806.5 190.4L808.6 187.6"/>
</g>
<g fill="none" stroke="#3d8ee8" stroke-width="1.1">
<path d="M16.8 185.2h2.8v2.8h-2.8zM1.4 198.5h2.8v2.8H1.4z"/>
<path d="M80.8 191.6h3.4v3.4h-3.4zM84.2 193.3H91.6"/>
<circle cx="93" cy="193.3" r="1.4"/>
<path d="M149 199.5h3v3h-3z"/>
<!-- hatch blue region -->
<!-- move -->
<path d="M283.2 185.8V201M275.6 193.4H290.8M281 188l2.2-2.2 2.2 2.2M281 198.8l2.2 2.2 2.2-2.2M278.2 191.2l-2.2 2.2 2.2 2.2M288.2 191.2l2.2 2.2-2.2 2.2"/>
<!-- copy blue -->
<path d="M315.3 192.6H324.2V201.5H315.3Z"/>
<path d="M319.2 195.6H328V204.6H319.2Z"/>
<!-- rotate -->
<path d="M355.2 200.5A9.6 9.6 0 1 0 348.2 202.2"/>
<path d="M346 199.6l2.6 2.6-2.6 2.6"/>
<!-- mirror blue -->
<path d="M388.3 185.9V201.1H396.5Z"/>
<!-- scale blue -->
<path d="M408 193V184H432V202.5H420.2"/>
<!-- fillet -->
<path d="M443.5 196.3A14.8 14.8 0 0 1 458 181.7"/>
<!-- chamfer -->
<path d="M479.4 194.3L492 181.6"/>
<!-- stretch -->
<path d="M525.2 182.3H527.4L537.2 204.6H525.2"/>
<!-- trim -->
<path d="M564.6 186.5H549.2V199.6H564.6"/>
<!-- extend -->
<path d="M583.7 193.6H595.4" stroke-width="1.4"/>
<!-- join -->
<path d="M619 181.7H630M629.9 203.6V192.6H640.5"/>
<!-- connect -->
<path d="M665.1 203.6V192.6H676"/>
<!-- arrange -->
<path d="M696.2 186.5h5.6v3.3h-5.6zM696.2 191.6h14.6v3.2h-14.6zM696.2 196.4h9.8v4h-9.8z"/>
<!-- offset -->
<path d="M729 203.2V189A7 7 0 0 1 743.6 187.2"/>
</g>
<g fill="#3d8ee8">
<circle cx="141.9" cy="187.3" r="1.3"/>
<circle cx="629.9" cy="203.8" r="1.4"/><circle cx="641" cy="192.6" r="1.4"/>
<circle cx="665.1" cy="203.8" r="1.4"/><circle cx="676.6" cy="192.6" r="1.4"/>
</g>
<rect x="157" y="192" width="3" height="3" fill="#d8d8d8"/>
<!-- hatch blue shape -->
<clipPath id="hc"><rect x="176.6" y="187.2" width="13.9" height="17.4"/></clipPath>
<g clip-path="url(#hc)"><circle cx="186.3" cy="190.7" r="9.6" fill="#2a6fc0" stroke="#3d8ee8" stroke-width="1.1"/>
<path d="M174 202L188 188M177 204L191 190M181 205L192 194M172 198L184 186" stroke="#16263a" stroke-width="1"/></g>
<!-- manipulate -->
<path d="M235.8 187V201.8H252M240.5 186.4A11 11 0 0 1 251.2 197" fill="none" stroke="#e3a82b" stroke-width="1.2"/>
<path d="M232.4 187.4L235.8 181L239.2 187.4Z M251.6 198.4L257.8 201.8 251.6 205.2Z" fill="#3d8ee8"/>
<circle cx="235.8" cy="201.8" r="2.4" fill="#3d8ee8"/>
<!-- explode star -->
<path d="M810.7 181.2l.9 2.4 2.5-.5-1.6 2 1.6 2-2.5-.5-.9 2.4-.9-2.4-2.5.5 1.6-2-1.6-2 2.5.5z" fill="#f0a83a"/>
<!-- control -->
<g fill="#3a86e0">
<rect x="843.3" y="190.1" width="4.8" height="4.8"/><rect x="843.3" y="197.7" width="4.8" height="4.8"/><rect x="850.8" y="190.1" width="4.8" height="4.8"/>
<rect x="862" y="190.1" width="4.8" height="4.8"/>
<rect x="850.8" y="208.6" width="4.8" height="4.8"/><rect x="843.3" y="215.8" width="4.8" height="4.8"/>
</g>
<g stroke="#1d3a60" stroke-width=".8">
<path d="M844.2 192.5h3M844.2 200.1h3M851.7 192.5h3M862.9 192.5h3M851.7 211h3M844.2 218.2h3"/>
</g>
<g fill="none" stroke="#9a9da3" stroke-width="1">
<rect x="869.6" y="190.5" width="4.2" height="4.2"/><rect x="862.4" y="198.1" width="4.2" height="4.2"/>
<rect x="843.7" y="209" width="4.2" height="4.2"/>
<path d="M872.6 212.2V220.4H863.8V210.6H865.5"/>
</g>
<circle cx="870" cy="213.6" r="4.6" fill="#24466e" stroke="#3a86e0" stroke-width="1"/>
<path d="M868.2 211.8h3.6v3.6h-3.6z" fill="none" stroke="#6aaaf0" stroke-width=".7"/>
<circle cx="852.8" cy="197.4" r="2.7" fill="#f5b21a"/><path d="M851.7 199.8h2.2v2.2h-2.2z" fill="#d8d8d8"/>
<circle cx="852.8" cy="214.8" r="2.7" fill="#cfcfcf"/><path d="M851.7 217.2h2.2v2.2h-2.2z" fill="#d8d8d8"/>
<path d="M866.2 193.6V203.2L868.4 201 870.4 204.4 872 203.6 870.2 200.4H873Z" fill="#ececec" stroke="#2c2e33" stroke-width=".6"/>
</svg>

<svg class="a" style="left:0;top:0" width="4" height="4"><path d="M0 0H2.4Q1.2 .8 1 1.6 .6 2.6 0 2.8Z" fill="#000"/></svg>
</body></html>
